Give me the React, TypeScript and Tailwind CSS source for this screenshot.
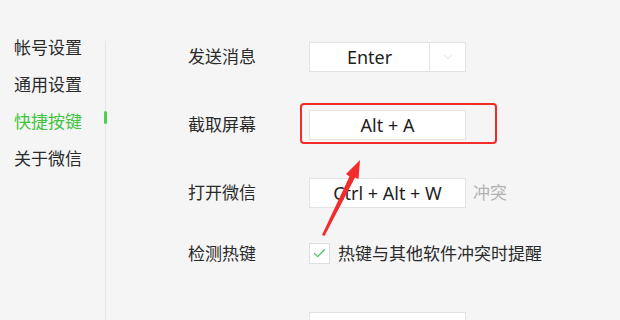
import { Check, ChevronDown } from 'lucide-react';

const navItems = ['帐号设置', '通用设置', '快捷按键', '关于微信'];

const font = { fontFamily: '"Noto Sans", "Noto Sans CJK SC", sans-serif' };

function KeyBox({ value }: { value: string }) {
  return (
    <div className="flex h-[30px] w-[157px] items-center justify-center border border-[#e3e3e3] bg-white text-[18px] text-[#1e1e1e]">
      {value}
    </div>
  );
}

function Row({ label, children, className = '' }: { label: string; children: React.ReactNode; className?: string }) {
  return (
    <div className={`flex h-[30px] items-center ${className}`}>
      <span className="w-[121px] text-[17px] text-[#2a2a2a]">{label}</span>
      {children}
    </div>
  );
}

export default function App() {
  return (
    <div className="flex h-[320px] w-[620px] overflow-hidden bg-[#f5f5f5]" style={font}>
      <aside className="relative flex w-[105px] shrink-0 flex-col pt-[29px] pl-[14px]">
        {navItems.map((item, idx) => (
          <div
            key={item}
            className={`relative flex h-[37px] items-center text-[17px] ${idx === 2 ? 'text-[#3ec43f]' : 'text-[#2a2a2a]'}`}
          >
            {item}
            {idx === 2 ? <span className="absolute -right-[1.5px] top-[8px] h-[13px] w-[3px] rounded-sm bg-[#4cd04f]" /> : null}
          </div>
        ))}
      </aside>
      <div className="mt-[41px] w-px shrink-0 bg-[#e6e6e6]" />

      <main className="relative flex flex-1 flex-col pt-[42px] pl-[82px]">
        <Row label="发送消息">
          <div className="flex h-[30px] w-[157px] border border-[#e3e3e3] bg-white">
            <div className="flex flex-1 items-center justify-center text-[18px] text-[#1e1e1e]">Enter</div>
            <div className="flex w-[36px] items-center justify-center border-l border-[#e3e3e3] text-[#cfcfcf]">
              <ChevronDown size={14} strokeWidth={1.2} />
            </div>
          </div>
        </Row>

        <Row label="截取屏幕" className="mt-[38px]">
          <div className="relative">
            <KeyBox value="Alt + A" />
            <div className="absolute -left-[9px] -top-[7px] h-[41px] w-[197px] rounded-[4px] border-[2.5px] border-[#f42b2b]" />
          </div>
        </Row>

        <Row label="打开微信" className="mt-[38px]">
          <KeyBox value="Ctrl + Alt + W" />
          <span className="ml-[7px] text-[17px] text-[#b0b0b0]">冲突</span>
        </Row>

        <Row label="检测热键" className="mt-[33px]">
          <div className="flex h-[21px] w-[21px] items-center justify-center border border-[#dedede] bg-white text-[#4cc35a]">
            <Check size={15} strokeWidth={2} />
          </div>
          <span className="ml-[8px] text-[17px] text-[#2a2a2a]">热键与其他软件冲突时提醒</span>
        </Row>

        <div className="mt-[45px] flex h-[30px] items-center pl-[121px]">
          <div className="h-[30px] w-[157px] border border-[#e3e3e3] bg-white" />
        </div>

        <svg className="pointer-events-none absolute left-0 top-0" width="515" height="320" viewBox="106 0 515 320">
          <path d="M322 235 L349.5 176.5 L346 174 L360 160 L358.5 179 L355 177.5 L324.5 236 Z" fill="#f42b2b" />
        </svg>
      </main>
    </div>
  );
}
